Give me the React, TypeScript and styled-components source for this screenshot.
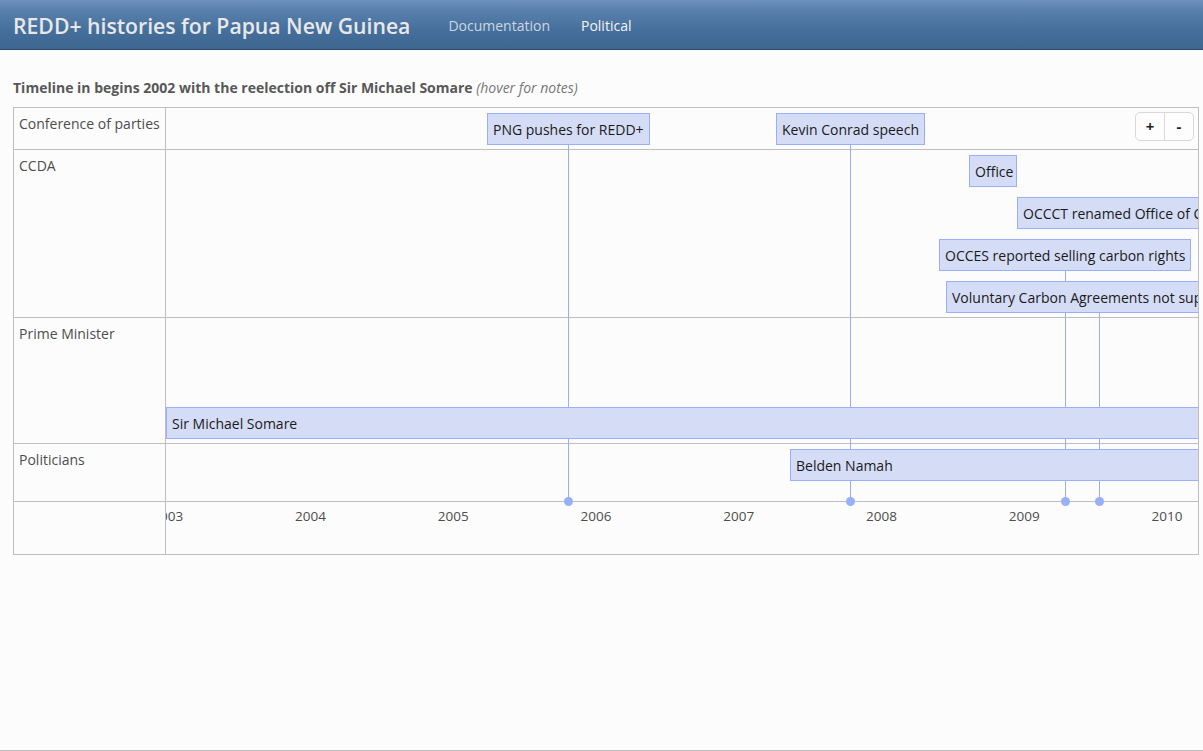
import React from "react";
import styled, { createGlobalStyle } from "styled-components";

const Global = createGlobalStyle`
  html, body { margin: 0; padding: 0; background: #fcfcfc; }
  body { font-family: "Open Sans", "DejaVu Sans", sans-serif; color: #333; }
  * { box-sizing: border-box; }
`;

const Page = styled.div`
  min-height: 100vh;
  border-bottom: 1px solid #bdbdbd;
`;

const NavBar = styled.header`
  height: 50px;
  display: flex;
  align-items: center;
  padding: 2px 13px 0 13px;
  background: linear-gradient(#6d92c0 0%, #5a80ad 20%, #46709c 60%, #3d6690 100%);
  border-bottom: 1px solid #2c4864;
`;

const Brand = styled.div`
  font-size: 21.2px;
  font-weight: 600;
  color: #e8e8e8;
  margin-right: 38px;
`;

const NavLink = styled.a<{ $active?: boolean }>`
  font-size: 14px;
  color: ${(p) => (p.$active ? "#f4f4f4" : "#cdd6e2")};
  text-decoration: none;
  margin-right: 31px;
`;

const Main = styled.main`
  padding: 28px 13px 0 13px;
`;

const Heading = styled.h4`
  margin: 0 0 9px 0;
  font-size: 14px;
  font-weight: 700;
  color: #585858;
  line-height: 20px;
`;

const Hint = styled.em`
  font-weight: 400;
  color: #777;
`;

const Timeline = styled.div`
  width: 1186px;
  border: 1px solid #bfbfbf;
  display: flex;
`;

const LabelColumn = styled.div`
  width: 152px;
  border-right: 1px solid #bfbfbf;
  display: flex;
  flex-direction: column;
`;

const Label = styled.div<{ $h: number; $last?: boolean }>`
  height: ${(p) => p.$h}px;
  padding: 6px 5px 4px 5px;
  font-size: 14px;
  line-height: 20px;
  color: #4d4d4d;
  white-space: nowrap;
  border-bottom: ${(p) => (p.$last ? "none" : "1px solid #bfbfbf")};
`;

const ContentColumn = styled.div`
  flex: 1;
  position: relative;
  overflow: hidden;
  display: flex;
  flex-direction: column;
`;

const Row = styled.div<{ $h: number; $last?: boolean }>`
  position: relative;
  height: ${(p) => p.$h}px;
  border-bottom: ${(p) => (p.$last ? "none" : "1px solid #bfbfbf")};
`;

const Item = styled.div`
  position: absolute;
  height: 32px;
  padding: 6px 5px 4px 5px;
  border: 1px solid #97b0f8;
  background: #d5ddf6;
  color: #1a1a1a;
  font-size: 14px;
  line-height: 20px;
  white-space: nowrap;
  z-index: 2;
`;

const Line = styled.div`
  position: absolute;
  width: 1px;
  background: #97b0f8;
  z-index: 1;
`;

const Dot = styled.div`
  position: absolute;
  width: 9px;
  height: 9px;
  border-radius: 50%;
  background: #97b0f8;
  z-index: 3;
`;

const AxisLabel = styled.div`
  position: absolute;
  top: 4px;
  font-size: 13.5px;
  line-height: 20px;
  color: #4d4d4d;
`;

const ZoomGroup = styled.div`
  position: absolute;
  top: 4px;
  right: 4px;
  display: flex;
  z-index: 4;
`;

const ZoomButton = styled.button<{ $side: "l" | "r" }>`
  width: 30px;
  height: 29px;
  padding: 0;
  background: #fdfdfd;
  border: 1px solid #d9d9d9;
  border-radius: ${(p) => (p.$side === "l" ? "5px 0 0 5px" : "0 5px 5px 0")};
  margin-left: ${(p) => (p.$side === "r" ? "-1px" : "0")};
  font-family: "Open Sans", sans-serif;
  font-size: 15px;
  font-weight: 700;
  color: #222;
  line-height: 1;
`;

const ROWS = [
  { label: "Conference of parties", h: 42 },
  { label: "CCDA", h: 168 },
  { label: "Prime Minister", h: 126 },
  { label: "Politicians", h: 58 },
];

type It = { text: string; left: number; top: number; width?: number };

const rowItems: It[][] = [
  [
    { text: "PNG pushes for REDD+", left: 321, top: 5 },
    { text: "Kevin Conrad speech", left: 610, top: 5 },
  ],
  [
    { text: "Office", left: 803, top: 5, width: 48 },
    { text: "OCCCT renamed Office of Climate Change and Development", left: 851, top: 47 },
    { text: "OCCES reported selling carbon rights", left: 773, top: 89 },
    { text: "Voluntary Carbon Agreements not supported", left: 780, top: 131 },
  ],
  [{ text: "Sir Michael Somare", left: 0, top: 89, width: 1100 }],
  [{ text: "Belden Namah", left: 624, top: 5, width: 500 }],
];

const lines = [
  { x: 402, from: 37 },
  { x: 684, from: 37 },
  { x: 899, from: 163 },
  { x: 933, from: 205 },
];

const AXIS_Y = 393;
const years = [2003, 2004, 2005, 2006, 2007, 2008, 2009, 2010];

export default function App() {
  return (
    <Page>
      <Global />
      <NavBar>
        <Brand>REDD+ histories for Papua New Guinea</Brand>
        <NavLink href="#">Documentation</NavLink>
        <NavLink href="#" $active>
          Political
        </NavLink>
      </NavBar>
      <Main>
        <Heading>
          Timeline in begins 2002 with the reelection off Sir Michael Somare <Hint>(hover for notes)</Hint>
        </Heading>
        <Timeline>
          <LabelColumn>
            {ROWS.map((r) => (
              <Label key={r.label} $h={r.h}>
                {r.label}
              </Label>
            ))}
            <Label $h={52} $last />
          </LabelColumn>
          <ContentColumn>
            {ROWS.map((r, i) => (
              <Row key={r.label} $h={r.h}>
                {rowItems[i].map((it) => (
                  <Item key={it.text} style={{ left: it.left, top: it.top, width: it.width }}>
                    {it.text}
                  </Item>
                ))}
              </Row>
            ))}
            <Row $h={52} $last>
              {years.map((y) => (
                <AxisLabel key={y} style={{ left: 129 + (y - 2004) * 142.75 }}>
                  {y}
                </AxisLabel>
              ))}
            </Row>
            {lines.map((l) => (
              <React.Fragment key={l.x}>
                <Line style={{ left: l.x, top: l.from, height: AXIS_Y - l.from }} />
                <Dot style={{ left: l.x - 4, top: AXIS_Y - 4 }} />
              </React.Fragment>
            ))}
            <ZoomGroup>
              <ZoomButton $side="l">+</ZoomButton>
              <ZoomButton $side="r">-</ZoomButton>
            </ZoomGroup>
          </ContentColumn>
        </Timeline>
      </Main>
    </Page>
  );
}
